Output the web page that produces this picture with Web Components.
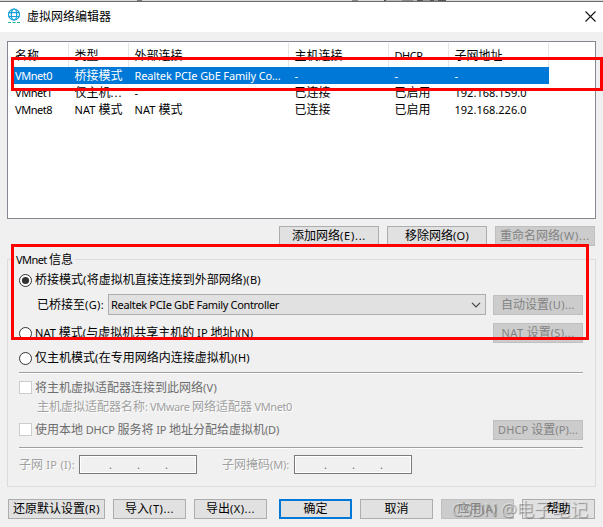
<!DOCTYPE html>
<html lang="zh-CN"><head><meta charset="utf-8"><title>虚拟网络编辑器</title>
<style>
html,body{margin:0;width:603px;height:527px;overflow:hidden;background:#f0f0f0}
body{font:12px/16px "Noto Sans","Noto Sans CJK SC",sans-serif;color:#000}
</style></head><body><network-editor></network-editor>
<script>
const define=(name,html,init)=>customElements.define(name,class extends HTMLElement{
  connectedCallback(){
    if(this.shadowRoot)return;
    this.attachShadow({mode:'open'}).innerHTML=html;
    if(init)init.call(this,this.shadowRoot);
  }
});
// Text line: Latin runs are set smaller than Han runs and tracked so the line is `w` pixels wide.
define('ui-text',`<style>:host{display:inline-block;white-space:pre;line-height:14px;height:16px;flex:none}
#t{display:inline-block;font-family:"Noto Sans CJK SC",sans-serif}
.l{font-family:"Noto Sans","Noto Sans CJK SC",sans-serif;font-size:var(--latin,11px)}</style><span id="t"></span>`,function(r){
  const t=r.getElementById('t'),w=+this.getAttribute('w');
  const s=this.getAttribute('text');
  let n=0;
  for(const run of s.match(/[\u4e00-\u9fff]+|[^\u4e00-\u9fff]+/g)||[]){
    const e=document.createElement('span');e.textContent=run;
    if(!/[\u4e00-\u9fff]/.test(run)){e.className='l';n+=run.length}
    t.append(e);
  }
  if(w&&n){
    const d=(w-t.getBoundingClientRect().width)/n;
    t.querySelectorAll('.l').forEach(e=>e.style.letterSpacing=d+'px');
  }
});
define('ui-button',`<style>:host{display:flex;box-sizing:border-box;height:20px;border:1px solid #adadad;background:#e1e1e1;align-items:center;justify-content:center;flex:none}
:host([off]){background:#ccc;border-color:#bfbfbf;color:#838383}
:host([primary]){border:2px solid #0078d7}</style><slot></slot>`);
define('ui-radio',`<style>:host{display:flex;align-items:center;gap:3px;height:16px}svg{flex:none}#d{display:none}:host([checked]) #d{display:block}</style>
<svg width="13" height="13"><circle cx="6.5" cy="6.5" r="6" fill="#fff" stroke="#333"/><circle id="d" cx="6.5" cy="6.5" r="3.6" fill="#333"/></svg><slot></slot>`);
define('ui-check',`<style>:host{display:flex;align-items:center;gap:3px;height:16px;color:#6d6d6d}i{box-sizing:border-box;width:13px;height:13px;border:1px solid #ccc;background:#fff;margin-top:-1px}</style><i></i><slot></slot>`);
define('ui-rule',`<style>:host{display:block;height:1px;background:#a0a0a0;border-bottom:1px solid #fff}</style>`);
define('ui-ip',`<style>:host{display:grid;grid-template-columns:repeat(3,28px);padding-left:4px;box-sizing:border-box;width:118px;height:19px;border:1px solid #7a7a7a;box-shadow:inset 0 0 0 1px #fff;font:11px/17px "Noto Sans",sans-serif;color:#6d6d6d;text-shadow:none}span{text-align:right}</style><span>.</span><span>.</span><span>.</span>`);
define('ui-select',`<style>:host{display:flex;box-sizing:border-box;width:378px;height:21px;border:1px solid #adadad;background:#e1e1e1;align-items:center;justify-content:space-between;padding:0 4px 0 2px}</style><slot></slot><svg width="10" height="6" fill="none" stroke="#444" stroke-width="1.2"><path d="M1 .8 5 4.8 9 .8"/></svg>`);
define('ui-titlebar',`<style>:host{display:flex;box-sizing:border-box;height:32px;background:#fff;padding:0 7px;align-items:center;position:relative}
#s{position:absolute;left:0;top:0;right:0;height:1px;border-bottom:1px solid #6b6b6b;background:linear-gradient(90deg,transparent 137px,#777 137px,#777 142px,transparent 142px,transparent 352px,#888 352px,#888 358px,transparent 358px,transparent 384px,#555 384px,#555 386px,#bbb 386px,#bbb 402px,#888 402px,#888 413px,#bbb 413px,#bbb 417px,#555 417px,#555 423px,#999 423px,#999 430px,#555 430px,#555 434px,#999 434px,#999 438px,#555 438px,#555 446px,transparent 446px),#dadada}
ui-text{margin:2px 0 0 6px;flex:1}</style><div id="s"></div>
<svg width="14" height="16" fill="none" stroke="#149fda" stroke-width="1.2"><circle cx="7" cy="6.5" r="5.5"/><ellipse cx="7" cy="6.5" rx="2.7" ry="5.5"/><path d="M1.5 4.7H12.5M1.5 8.5H12.5"/><path d="M1 14.5H4M5.5 14.5H8.5M10 14.5H13" stroke="#1fb8a0"/></svg>
<ui-text text="虚拟网络编辑器"></ui-text>
<svg width="11" height="11" stroke="#111" stroke-width="1.1"><path d="M.5.5 10.5 10.5M10.5.5.5 10.5"/></svg>`);
define('ui-list',`<style>:host{display:block;box-sizing:border-box;margin:9px 7px 0;height:178px;border:1px solid #828790;background:#fff;padding:1px 0 0 3px}
.r{display:grid;grid-template-columns:58px 60px 160px 100px 60px 100px;height:17px;width:538px;align-items:center}
.h{height:24px}.h>*{box-sizing:border-box;height:24px;border-right:1px solid #e5e5e5;padding-top:5px}
.r>*{padding-left:5.5px}.r>:first-child{padding-left:4px}.sel{background:#0078d7;color:#fff}</style>
<div class="r h"><ui-text text="名称"></ui-text><ui-text text="类型"></ui-text><ui-text text="外部连接"></ui-text><ui-text text="主机连接"></ui-text><ui-text text="DHCP" w="28"></ui-text><ui-text text="子网地址"></ui-text></div>
<div class="r sel"><ui-text text="VMnet0" w="37"></ui-text><ui-text text="桥接模式"></ui-text><ui-text text="Realtek PCIe GbE Family Co..." w="146"></ui-text><ui-text text="-"></ui-text><ui-text text="-"></ui-text><ui-text text="-"></ui-text></div>
<div class="r"><ui-text text="VMnet1" w="37"></ui-text><ui-text text="仅主机..." w="48"></ui-text><ui-text text="-"></ui-text><ui-text text="已连接"></ui-text><ui-text text="已启用"></ui-text><ui-text text="192.168.159.0" w="72"></ui-text></div>
<div class="r"><ui-text text="VMnet8" w="37"></ui-text><ui-text text="NAT 模式" w="48"></ui-text><ui-text text="NAT 模式" w="48"></ui-text><ui-text text="已连接"></ui-text><ui-text text="已启用"></ui-text><ui-text text="192.168.226.0" w="72"></ui-text></div>`);
define('vmnet-group',`<style>:host{display:block;box-sizing:border-box;margin:13px 7px 0;width:589px;height:228px;border:1px solid #dcdcdc;padding:0 12px 0 11px}
.lg{height:16px;margin:-8px 0 0 -4px;width:60px;background:#f0f0f0}
.f{display:flex;align-items:center}.b{justify-content:space-between}ui-button{width:90px}.g{color:#a0a0a0;text-shadow:1px 1px #fff}</style>
<div class="lg"><ui-text text="VMnet 信息" w="57" style="margin-left:1px"></ui-text></div>
<ui-radio checked style="margin-top:4px"><ui-text text="桥接模式(将虚拟机直接连接到外部网络)(B)" w="226"></ui-text></ui-radio>
<div class="f" style="margin-top:6px;height:21px;padding-left:18px"><ui-text text="已桥接至(G):" w="67"></ui-text><ui-select style="margin-left:4px"><ui-text text="Realtek PCIe GbE Family Controller" w="168"></ui-text></ui-select><ui-button off style="margin:1px 0 0 7px"><ui-text text="自动设置(U)..." w="74"></ui-text></ui-button></div>
<div class="f b" style="margin-top:8px;height:20px"><ui-radio><ui-text text="NAT 模式(与虚拟机共享主机的 IP 地址)(N)" w="218"></ui-text></ui-radio><ui-button off><ui-text text="NAT 设置(S)..." w="73"></ui-text></ui-button></div>
<ui-radio style="margin-top:7px"><ui-text text="仅主机模式(在专用网络内连接虚拟机)(H)" w="215"></ui-text></ui-radio>
<ui-rule style="margin-top:6px"></ui-rule>
<ui-check style="margin-top:6px"><ui-text text="将主机虚拟适配器连接到此网络(V)" w="182"></ui-text></ui-check>
<div class="g" style="height:16px;margin:3px 0 0 18px"><ui-text text="主机虚拟适配器名称: VMware 网络适配器 VMnet0" w="255"></ui-text></div>
<div class="f b" style="height:20px;margin-top:5px"><ui-check><ui-text text="使用本地 DHCP 服务将 IP 地址分配给虚拟机(D)" w="244"></ui-text></ui-check><ui-button off><ui-text text="DHCP 设置(P)..." w="80"></ui-text></ui-button></div>
<ui-rule style="margin-top:7px"></ui-rule>
<div class="f g" style="margin-top:6px;height:19px"><ui-text text="子网 IP (I):" w="56"></ui-text><ui-ip style="margin-left:4px"></ui-ip><ui-text text="子网掩码(M):" w="67" style="margin-left:25px"></ui-text><ui-ip style="margin-left:5px"></ui-ip></div>`);
define('network-editor',`<style>:host{display:block;position:relative;width:603px;height:527px;background:#f0f0f0}
.f{display:flex}.t{justify-content:flex-end;gap:8px;padding:7px 8px 0 0}.t ui-button{width:100px}
.m{gap:8px;padding:12px 0 0 8px}.m ui-button{width:73px}
.red{position:absolute;box-sizing:border-box;border:3px solid #f00}
.wm{position:absolute;left:451px;top:501px;height:24px;--latin:18px;font-size:18px;color:#fff6;text-shadow:1px 1px 1px #5559}
.over{position:relative;z-index:1}</style>
<ui-titlebar></ui-titlebar><ui-list></ui-list>
<div class="f t"><ui-button><ui-text text="添加网络(E)..." w="74"></ui-text></ui-button><ui-button><ui-text text="移除网络(O)" w="64"></ui-text></ui-button><ui-button off><ui-text text="重命名网络(W)..." w="90"></ui-text></ui-button></div>
<vmnet-group></vmnet-group>
<div class="f m"><ui-button style="width:97px"><ui-text text="还原默认设置(R)" w="87"></ui-text></ui-button><ui-button><ui-text text="导入(T)..." w="49"></ui-text></ui-button><ui-button><ui-text text="导出(X)..." w="49"></ui-text></ui-button><ui-button primary style="margin-left:4px"><ui-text text="确定"></ui-text></ui-button><ui-button><ui-text text="取消"></ui-text></ui-button><ui-button off><ui-text class="over" text="应用(A)" w="40"></ui-text></ui-button><ui-button><ui-text class="over" text="帮助"></ui-text></ui-button></div>
<div class="red" style="left:11px;top:57px;width:592px;height:34px"></div>
<div class="red" style="left:11px;top:244px;width:578px;height:96px"></div>
<div class="wm"><ui-text text="CSDN @电子笔记" w="137"></ui-text></div>`);
</script></body></html>
